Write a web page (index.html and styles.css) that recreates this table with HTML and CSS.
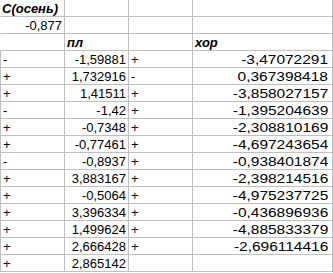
FILE: index.html
```html
<!DOCTYPE html>
<html>
<head>
<meta charset="utf-8">
<link rel="stylesheet" href="styles.css">
</head>
<body>
<div class="sheet">
  <div class="row top"><div class="c a hdr">C(осень)</div><div class="c b"></div><div class="c cc"></div><div class="c d"></div></div>
  <div class="row top"><div class="c a num">-0,877</div><div class="c b"></div><div class="c cc"></div><div class="c d"></div></div>
  <div class="row top"><div class="c a"></div><div class="c b hdr">пл</div><div class="c cc"></div><div class="c d hdr">хор</div></div>
  <div class="row"><div class="c a">-</div><div class="c b num">-1,59881</div><div class="c cc">+</div><div class="c d num"><span class="wide">-3,47072291</span></div></div>
  <div class="row"><div class="c a">+</div><div class="c b num">1,732916</div><div class="c cc">-</div><div class="c d num"><span class="wide">0,367398418</span></div></div>
  <div class="row"><div class="c a">+</div><div class="c b num">1,41511</div><div class="c cc">+</div><div class="c d num"><span class="wide">-3,858027157</span></div></div>
  <div class="row"><div class="c a">-</div><div class="c b num">-1,42</div><div class="c cc">+</div><div class="c d num"><span class="wide">-1,395204639</span></div></div>
  <div class="row"><div class="c a">+</div><div class="c b num">-0,7348</div><div class="c cc">+</div><div class="c d num"><span class="wide">-2,308810169</span></div></div>
  <div class="row"><div class="c a">+</div><div class="c b num">-0,77461</div><div class="c cc">+</div><div class="c d num"><span class="wide">-4,697243654</span></div></div>
  <div class="row"><div class="c a">-</div><div class="c b num">-0,8937</div><div class="c cc">+</div><div class="c d num"><span class="wide">-0,938401874</span></div></div>
  <div class="row"><div class="c a">+</div><div class="c b num">3,883167</div><div class="c cc">+</div><div class="c d num"><span class="wide">-2,398214516</span></div></div>
  <div class="row"><div class="c a">+</div><div class="c b num">-0,5064</div><div class="c cc">+</div><div class="c d num"><span class="wide">-4,975237725</span></div></div>
  <div class="row"><div class="c a">+</div><div class="c b num">3,396334</div><div class="c cc">+</div><div class="c d num"><span class="wide">-0,436896936</span></div></div>
  <div class="row"><div class="c a">+</div><div class="c b num">1,499624</div><div class="c cc">+</div><div class="c d num"><span class="wide">-4,885833379</span></div></div>
  <div class="row"><div class="c a">+</div><div class="c b num">2,666428</div><div class="c cc">+</div><div class="c d num"><span class="wide">-2,696114416</span></div></div>
  <div class="row"><div class="c a">+</div><div class="c b num">2,865142</div><div class="c cc"></div><div class="c d"></div></div>
</div>
</body>
</html>
```

FILE: styles.css
```css
html, body {
  margin: 0;
  padding: 0;
  background: #ffffff;
}
.sheet {
  font-family: "Liberation Sans", Arial, sans-serif;
  font-size: 13px;
  color: #000000;
  width: 333px;
}
.row {
  display: grid;
  grid-template-columns: 65px 64px 64px 140px;
  height: 17px;
}
.c {
  box-sizing: border-box;
  height: 17px;
  border-right: 1px solid #c0c0c0;
  border-bottom: 1px solid #c0c0c0;
  padding: 1px 2px 0 2px;
  line-height: 15px;
  white-space: nowrap;
  overflow: visible;
}
.a {
  border-left: 1px solid #c0c0c0;
  padding-left: 2px;
}
.top .a {
  border-left-color: transparent;
}
.num {
  text-align: right;
  padding-right: 2px;
}
.d.num {
  padding-right: 4px;
}
.wide {
  display: inline-block;
  transform: scaleX(1.19);
  transform-origin: right center;
}
.hdr {
  font-weight: bold;
  font-style: italic;
}
.top .a.hdr {
  padding-left: 1px;
}
```
